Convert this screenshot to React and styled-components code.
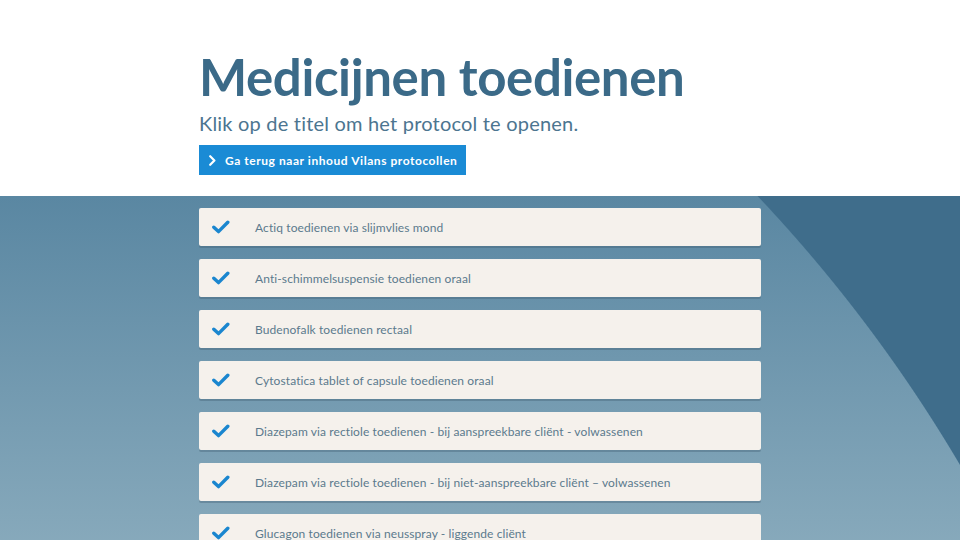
import React from "react";
import styled, { createGlobalStyle } from "styled-components";

const GlobalStyle = createGlobalStyle`
  html, body {
    margin: 0;
    padding: 0;
    background: #ffffff;
    font-family: Lato, "Noto Sans", sans-serif;
  }
`;

const Page = styled.div`
  width: 960px;
  height: 540px;
  overflow: hidden;
  display: flex;
  flex-direction: column;
`;

const Header = styled.header`
  flex: 0 0 196px;
  box-sizing: border-box;
  padding: 47px 0 0 199px;
  background: #ffffff;
`;

const Title = styled.h1`
  margin: 0;
  font-family: Lato, sans-serif;
  font-weight: 700;
  font-size: 51px;
  line-height: 60px;
  letter-spacing: -0.4px;
  color: #3b6a88;
`;

const Subtitle = styled.p`
  margin: 4px 0 0;
  font-size: 20px;
  line-height: 24px;
  font-weight: 400;
  letter-spacing: 0.2px;
  color: #4c7590;
`;

const BackButton = styled.a`
  display: inline-flex;
  align-items: center;
  gap: 9px;
  margin-top: 10px;
  height: 30px;
  padding: 0 9px 0 10px;
  box-sizing: border-box;
  background: #1a8bd5;
  color: #ffffff;
  font-size: 12px;
  font-weight: 700;
  letter-spacing: 0.55px;
  text-decoration: none;
`;

const Listing = styled.section`
  flex: 1;
  padding: 12px 0 0 199px;
  background:
    radial-gradient(circle 1500px at -332px 1031px, transparent 1499.5px, #3f6d8b 1500.5px),
    linear-gradient(180deg, #5a87a2 0%, #88aabc 100%);
`;

const List = styled.ul`
  list-style: none;
  margin: 0;
  padding: 0;
  width: 562px;
  display: flex;
  flex-direction: column;
  gap: 13px;
`;

const Item = styled.li`
  flex: 0 0 38px;
  display: flex;
  align-items: center;
  background: #f5f1ec;
  border-radius: 2px;
  box-shadow: 0 2px 0 rgba(60, 90, 110, 0.35);
`;

const CheckWrap = styled.span`
  width: 56px;
  display: flex;
  padding-left: 13px;
  box-sizing: border-box;
`;

const Label = styled.span`
  font-size: 12px;
  color: #5b7a8d;
  letter-spacing: 0.1px;
`;

const Check = () => (
  <svg width="18" height="14" viewBox="0 0 18 14">
    <path d="M1.8 7.2 L6.5 11.6 L15.8 2.2" fill="none" stroke="#1a86cf" strokeWidth="3.4" strokeLinecap="round" strokeLinejoin="round" />
  </svg>
);

const Chevron = () => (
  <svg width="7" height="11" viewBox="0 0 7 11">
    <path d="M1.2 1.2 L5.4 5.5 L1.2 9.8" fill="none" stroke="#ffffff" strokeWidth="2.2" strokeLinecap="round" strokeLinejoin="round" />
  </svg>
);

const protocols = [
  "Actiq toedienen via slijmvlies mond",
  "Anti-schimmelsuspensie toedienen oraal",
  "Budenofalk toedienen rectaal",
  "Cytostatica tablet of capsule toedienen oraal",
  "Diazepam via rectiole toedienen - bij aanspreekbare cliënt - volwassenen",
  "Diazepam via rectiole toedienen - bij niet-aanspreekbare cliënt – volwassenen",
  "Glucagon toedienen via neusspray - liggende cliënt",
];

const App = () => {
  return (
    <Page>
      <GlobalStyle />
      <Header>
        <Title>Medicijnen toedienen</Title>
        <Subtitle>Klik op de titel om het protocol te openen.</Subtitle>
        <BackButton href="#">
          <Chevron />
          Ga terug naar inhoud Vilans protocollen
        </BackButton>
      </Header>
      <Listing>
        <List>
          {protocols.map((p) => (
            <Item key={p}>
              <CheckWrap>
                <Check />
              </CheckWrap>
              <Label>{p}</Label>
            </Item>
          ))}
        </List>
      </Listing>
    </Page>
  );
};

export default App;
